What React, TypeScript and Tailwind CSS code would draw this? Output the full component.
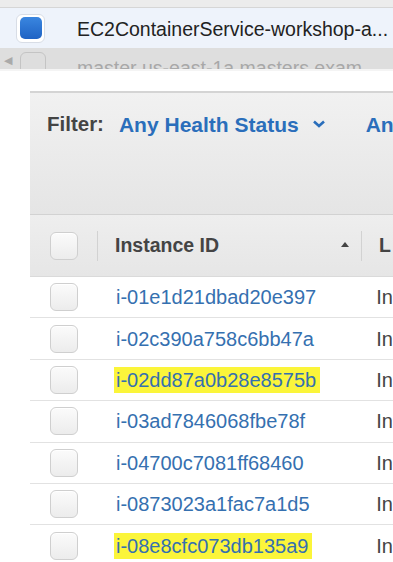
import React from "react";

const ids: { id: string; hl?: boolean }[] = [
  { id: "i-01e1d21dbad20e397" },
  { id: "i-02c390a758c6bb47a" },
  { id: "i-02dd87a0b28e8575b", hl: true },
  { id: "i-03ad7846068fbe78f" },
  { id: "i-04700c7081ff68460" },
  { id: "i-0873023a1fac7a1d5" },
  { id: "i-08e8cfc073db135a9", hl: true },
];

function Box() {
  return (
    <div className="w-[28px] h-[28px] rounded-[6px] border border-[#cfcfcf] bg-gradient-to-b from-[#fbfbfb] to-[#ececec] shadow-[inset_0_1px_0_#fff]" />
  );
}

export default function App() {
  return (
    <div className="w-[393px] h-[562px] overflow-hidden bg-white font-['Liberation_Sans',Arial,sans-serif]">
      <div className="h-[8px] bg-[#ececec] border-b border-[#d6d6d6]" />
      <div className="h-[40px] bg-[#eef3fb] flex items-center pl-[16px]">
        <div className="w-[29px] h-[29px] rounded-[6px] border border-[#d8dde6] bg-white flex items-center justify-center">
          <div className="w-[22px] h-[22px] rounded-[5px] bg-gradient-to-b from-[#3a86e0] to-[#1f63c4]" />
        </div>
        <span className="ml-[32px] mt-[3px] text-[19.5px] text-[#222] whitespace-nowrap">
          EC2ContainerService-workshop-a...
        </span>
      </div>
      <div className="h-[23px] bg-[#dedede] relative overflow-hidden border-b-[2px] border-[#f4f4f4]">
        <span className="absolute left-[4px] top-[4px] text-[11px] text-[#aaa]">◀</span>
        <div className="absolute left-[20px] top-[4px] w-[26px] h-[26px] rounded-[6px] border border-[#c4c4c4]" />
        <span className="absolute left-[77px] top-[11px] text-[19.5px] text-[#a8a8a8] whitespace-nowrap leading-none">
          master us-east-1a masters.exam
        </span>
      </div>
      <div className="h-[20px]" />
      <div className="ml-[30px] border-t-[2px] border-[#d4d4d4]">
        <div className="h-[122px] bg-gradient-to-b from-[#f1f1f1] to-[#e5e5e5] border-b border-[#d2d2d2] flex items-start pt-[16px] pl-[17px] whitespace-nowrap">
          <span className="text-[20.5px] font-bold text-[#444]">Filter:</span>
          <span className="ml-[15px] text-[21px] font-bold text-[#2a6ebb] flex items-center">
            Any Health Status
            <svg width="14" height="10" viewBox="0 0 14 10" className="ml-[13px] mt-[-2px]">
              <path d="M2 2.5 L7 7 L12 2.5" stroke="#2a6ebb" strokeWidth="2.6" fill="none" />
            </svg>
          </span>
          <span className="ml-[40px] text-[21px] font-bold text-[#2a6ebb]">Any</span>
        </div>
        <div className="h-[62px] bg-gradient-to-b from-[#eeeeee] to-[#e6e6e6] border-b border-[#dadada] flex items-center whitespace-nowrap">
          <div className="ml-[20px]"><Box /></div>
          <div className="ml-[19px] w-px h-[30px] bg-[#d2d2d2]" />
          <span className="ml-[17px] w-[225px] text-[19.5px] font-bold text-[#444]">Instance ID</span>
          <svg width="10" height="6" viewBox="0 0 10 6" className="ml-[0px] mt-[-3px]">
            <path d="M1 6 L5 1 L9 6 Z" fill="#444" />
          </svg>
          <div className="ml-[11px] w-px h-[30px] bg-[#d2d2d2]" />
          <span className="ml-[17px] text-[19.5px] font-bold text-[#444]">L</span>
        </div>
        {ids.map((r) => (
          <div key={r.id} className="h-[41.4px] border-b border-[#e2e2e2] flex items-center whitespace-nowrap">
            <div className="ml-[20px]"><Box /></div>
            <div className="ml-[38px] w-[266px]">
              <span
                className={
                  "text-[20px] text-[#3570b0] " +
                  (r.hl ? "bg-[#fbf53a] py-[2px] pl-[2px] pr-[4px] -ml-[2px]" : "")
                }
              >
                {r.id}
              </span>
            </div>
            <span className="text-[20px] text-[#444]">In</span>
          </div>
        ))}
      </div>
    </div>
  );
}
